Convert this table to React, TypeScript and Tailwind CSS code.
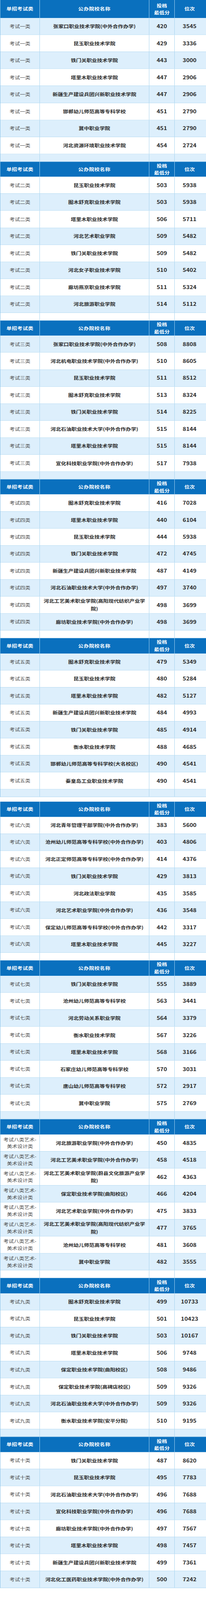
import React, { useLayoutEffect, useState } from 'react';

type Row = [string, string, string];

interface Section {
  cat: string;
  rows: Row[];
}

const sections: Section[] = [
  {
    cat: '考试一类',
    rows: [
      ['张家口职业技术学院(中外合作办学)', '420', '3545'],
      ['昆玉职业技术学院', '429', '3336'],
      ['铁门关职业技术学院', '443', '3000'],
      ['塔里木职业技术学院', '447', '2906'],
      ['新疆生产建设兵团兴新职业技术学院', '447', '2906'],
      ['邯郸幼儿师范高等专科学校', '451', '2790'],
      ['冀中职业学院', '451', '2790'],
      ['河北资源环境职业技术学院', '454', '2724'],
    ],
  },
  {
    cat: '考试二类',
    rows: [
      ['昆玉职业技术学院', '503', '5938'],
      ['图木舒克职业技术学院', '503', '5938'],
      ['塔里木职业技术学院', '506', '5711'],
      ['河北艺术职业学院', '509', '5482'],
      ['铁门关职业技术学院', '509', '5482'],
      ['河北女子职业技术学院', '510', '5402'],
      ['廊坊燕京职业技术学院', '511', '5324'],
      ['河北旅游职业学院', '514', '5112'],
    ],
  },
  {
    cat: '考试三类',
    rows: [
      ['张家口职业技术学院(中外合作办学)', '508', '8808'],
      ['河北机电职业技术学院(中外合作办学)', '510', '8605'],
      ['昆玉职业技术学院', '511', '8512'],
      ['图木舒克职业技术学院', '513', '8324'],
      ['铁门关职业技术学院', '514', '8225'],
      ['河北石油职业技术大学(中外合作办学)', '515', '8144'],
      ['塔里木职业技术学院', '515', '8144'],
      ['宣化科技职业学院(中外合作办学)', '517', '7938'],
    ],
  },
  {
    cat: '考试四类',
    rows: [
      ['图木舒克职业技术学院', '416', '7028'],
      ['塔里木职业技术学院', '440', '6104'],
      ['昆玉职业技术学院', '444', '5938'],
      ['铁门关职业技术学院', '472', '4745'],
      ['新疆生产建设兵团兴新职业技术学院', '487', '4149'],
      ['河北石油职业技术大学(中外合作办学)', '497', '3740'],
      ['河北工艺美术职业学院(高阳现代纺织产业学院)', '498', '3699'],
      ['廊坊职业技术学院(中外合作办学)', '498', '3699'],
    ],
  },
  {
    cat: '考试五类',
    rows: [
      ['图木舒克职业技术学院', '479', '5349'],
      ['昆玉职业技术学院', '480', '5284'],
      ['塔里木职业技术学院', '482', '5127'],
      ['新疆生产建设兵团兴新职业技术学院', '484', '4993'],
      ['铁门关职业技术学院', '485', '4914'],
      ['衡水职业技术学院', '488', '4685'],
      ['邯郸幼儿师范高等专科学校(大名校区)', '490', '4541'],
      ['秦皇岛工业职业技术学院', '490', '4541'],
    ],
  },
  {
    cat: '考试六类',
    rows: [
      ['河北青年管理干部学院(中外合作办学)', '383', '5600'],
      ['沧州幼儿师范高等专科学校(中外合作办学)', '403', '4806'],
      ['河北正定师范高等专科学校(中外合作办学)', '414', '4376'],
      ['铁门关职业技术学院', '429', '3813'],
      ['河北政法职业学院', '435', '3585'],
      ['河北艺术职业学院(中外合作办学)', '436', '3548'],
      ['保定幼儿师范高等专科学校(中外合作办学)', '442', '3317'],
      ['塔里木职业技术学院', '445', '3227'],
    ],
  },
  {
    cat: '考试七类',
    rows: [
      ['铁门关职业技术学院', '555', '3889'],
      ['沧州幼儿师范高等专科学校', '563', '3441'],
      ['河北劳动关系职业学院', '564', '3379'],
      ['衡水职业技术学院', '567', '3226'],
      ['塔里木职业技术学院', '568', '3166'],
      ['石家庄幼儿师范高等专科学校', '570', '3031'],
      ['唐山幼儿师范高等专科学校', '572', '2917'],
      ['冀中职业学院', '575', '2769'],
    ],
  },
  {
    cat: '考试八类艺术-美术设计类',
    rows: [
      ['河北旅游职业学院(中外合作办学)', '450', '4835'],
      ['河北工艺美术职业学院(中外合作办学)', '458', '4518'],
      ['河北工艺美术职业学院(蔚县文化旅游产业学院)', '462', '4363'],
      ['保定职业技术学院(曲阳校区)', '466', '4204'],
      ['河北艺术职业学院(中外合作办学)', '475', '3833'],
      ['河北工艺美术职业学院(高阳现代纺织产业学院)', '477', '3765'],
      ['沧州幼儿师范高等专科学校', '481', '3608'],
      ['冀中职业学院', '482', '3555'],
    ],
  },
  {
    cat: '考试九类',
    rows: [
      ['图木舒克职业技术学院', '499', '10733'],
      ['昆玉职业技术学院', '501', '10423'],
      ['铁门关职业技术学院', '503', '10167'],
      ['塔里木职业技术学院', '506', '9748'],
      ['保定职业技术学院(曲阳校区)', '508', '9486'],
      ['保定职业技术学院(高碑店校区)', '509', '9326'],
      ['河北石油职业技术大学(中外合作办学)', '509', '9326'],
      ['衡水职业技术学院(安平分院)', '510', '9195'],
    ],
  },
  {
    cat: '考试十类',
    rows: [
      ['铁门关职业技术学院', '487', '8620'],
      ['昆玉职业技术学院', '495', '7783'],
      ['河北石油职业技术大学(中外合作办学)', '496', '7688'],
      ['宣化科技职业学院(中外合作办学)', '496', '7688'],
      ['廊坊职业技术学院(中外合作办学)', '497', '7567'],
      ['塔里木职业技术学院', '498', '7457'],
      ['新疆生产建设兵团兴新职业技术学院', '499', '7361'],
      ['河北化工医药职业技术学院(中外合作办学)', '500', '7242'],
    ],
  },
];

// the whole sheet is laid out for a 4806px tall frame
const SHEET_H = 4806;

// column widths shared by header and body
const col1 = 'w-[101px] shrink-0 flex items-center justify-center px-1 text-center';
const col2 = 'w-[280px] shrink-0 flex items-center justify-center px-2 text-center';
const col3 = 'w-[65px] shrink-0 flex items-center justify-center text-center';
const col4 = 'flex-1 flex items-center justify-center pr-1 text-center';

function HeaderRow({ tall }: { tall?: boolean }) {
  const sep = 'border-r border-[#a9d4f0]';
  return (
    <div
      className={`flex ${tall ? 'h-[54.3px]' : 'h-[45.5px]'} bg-[#0a70be] text-[13.3px] font-bold text-white`}
    >
      <div className={`${col1} ${sep} tracking-[0.5px]`}>单招考试类</div>
      <div className={`${col2} ${sep} tracking-[0.5px]`}>公办院校名称</div>
      <div className={`${col3} ${sep} flex-col leading-[21.5px]`}>
        <span>投档</span>
        <span>最低分</span>
      </div>
      <div className={col4}>位次</div>
    </div>
  );
}

function DataRow({ cat, row, striped }: { cat: string; row: Row; striped: boolean }) {
  const [name, score, rank] = row;
  const sep = 'border-r border-[#a6d3ef]';
  return (
    <div
      className={`flex h-[51.05px] border-b border-[#a6d3ef] ${striped ? 'bg-[#ddeffc]' : 'bg-white'}`}
    >
      <div className={`${col1} ${sep} text-[13.3px] leading-[21px] text-[#4a4a4a]`}>{cat}</div>
      <div className={`${col2} ${sep} text-[13.4px] font-semibold leading-[22.5px] text-[#2b2b2b]`}>{name}</div>
      <div className={`${col3} ${sep} text-[15px] font-bold text-[#2b2b2b]`}>{score}</div>
      <div className={`${col4} text-[15px] font-bold text-[#2b2b2b]`}>{rank}</div>
    </div>
  );
}

function SpacerRow({ striped }: { striped: boolean }) {
  const sep = 'border-r border-[#a6d3ef]';
  return (
    <div className={`flex h-[23.2px] border-b border-[#a6d3ef] ${striped ? 'bg-[#ddeffc]' : 'bg-white'}`}>
      <div className={`${col1} ${sep}`} />
      <div className={`${col2} ${sep}`} />
      <div className={`${col3} ${sep}`} />
      <div className={col4} />
    </div>
  );
}

export default function App() {
  // fit the sheet into whatever height the window really has
  const [fit, setFit] = useState(1);
  useLayoutEffect(() => {
    setFit(Math.min(1, window.innerHeight / SHEET_H));
  }, []);

  // stripes run on through every body row and spacer, headers are skipped
  let n = 0;
  const blocks = [sections.slice(0, 5), sections.slice(5)];

  return (
    <div
      className="w-[527px] overflow-hidden bg-white font-['Noto_Sans_CJK_SC','Noto_Sans',sans-serif]"
      style={{ height: SHEET_H * fit }}
    >
      <div className="origin-top" style={{ transform: `scaleY(${fit})` }}>
        {blocks.map((block, bi) => (
          <div key={bi} className={`border-l border-[#86c1e7] ${bi > 0 ? 'mt-[14px]' : ''}`}>
            {block.map((s, si) => {
              const last = bi === blocks.length - 1 && si === block.length - 1;
              return (
                <div key={s.cat}>
                  <HeaderRow tall={bi === 0 && si === 0} />
                  {s.rows.map((r, ri) => (
                    <DataRow key={ri} cat={s.cat} row={r} striped={n++ % 2 === 0} />
                  ))}
                  {!last && <SpacerRow striped={n++ % 2 === 0} />}
                </div>
              );
            })}
          </div>
        ))}
      </div>
    </div>
  );
}
